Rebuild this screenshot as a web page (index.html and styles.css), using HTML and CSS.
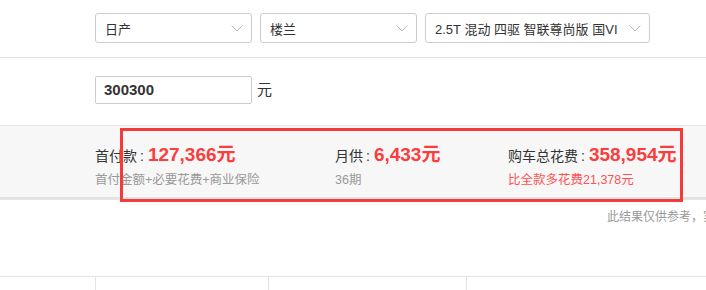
FILE: index.html
```html
<!DOCTYPE html>
<html lang="zh-CN">
<head>
    <meta charset="UTF-8">
    <title>购车计算器</title>
    <link rel="stylesheet" href="styles.css">
</head>
<body>
    <div class="page">
        <!-- 车型选择 -->
        <div class="sel-row">
            <div class="select w-brand"><span>日产</span><svg class="arrow" viewBox="0 0 12 7"><path d="M0.5 0.5 L6 6 L11.5 0.5"/></svg></div>
            <div class="select w-brand"><span>楼兰</span><svg class="arrow" viewBox="0 0 12 7"><path d="M0.5 0.5 L6 6 L11.5 0.5"/></svg></div>
            <div class="select w-model"><span>2.5T 混动 四驱 智联尊尚版 国VI</span><svg class="arrow" viewBox="0 0 12 7"><path d="M0.5 0.5 L6 6 L11.5 0.5"/></svg></div>
        </div>

        <!-- 裸车价格 -->
        <div class="price-row">
            <div class="price-input">300300</div>
            <span class="unit">元</span>
        </div>

        <!-- 计算结果 -->
        <div class="result">
            <div class="result-col c1">
                <p class="main">首付款<span class="colon">:</span><b>127,366元</b></p>
                <p class="sub">首付金额+必要花费+商业保险</p>
            </div>
            <div class="result-col c2">
                <p class="main">月供<span class="colon">:</span><b>6,433元</b></p>
                <p class="sub">36期</p>
            </div>
            <div class="result-col c3">
                <p class="main">购车总花费<span class="colon">:</span><b>358,954元</b></p>
                <p class="sub red">比全款多花费21,378元</p>
            </div>
            <div class="mark"></div>
        </div>

        <p class="note">此结果仅供参考，实际应缴费以当地为准</p>

        <!-- 明细表 -->
        <div class="table">
            <div class="cell first"></div>
            <div class="cell second"></div>
            <div class="cell third"></div>
            <div class="cell"></div>
        </div>
    </div>
</body>
</html>
```

FILE: styles.css
```css
/* リセット */
* {
    box-sizing: border-box;
    margin: 0;
    padding: 0;
}
body {
    font-family: "Liberation Sans", "Noto Sans CJK SC", sans-serif;
    color: #333;
    background-color: #fff;
    overflow: hidden;
}
.page {
    width: 800px;
}
/* 车型选择 */
.sel-row {
    height: 58px;
    padding: 13px 0 0 95px;
    border-bottom: 1px solid #e3e3e3;
    display: flex;
    gap: 8px;
}
.select {
    height: 30px;
    border: 1px solid #ccc;
    border-radius: 3px;
    display: flex;
    align-items: center;
    justify-content: space-between;
    padding: 0 8px 0 9px;
    font-size: 13px;
    color: #333;
}
.w-brand {
    width: 157px;
}
.w-model {
    width: 225px;
}
.arrow {
    width: 12px;
    height: 7px;
    fill: none;
    stroke: #bbb;
    stroke-width: 1;
}
/* 裸车价格 */
.price-row {
    height: 67px;
    padding: 18px 0 0 95px;
    display: flex;
    align-items: flex-start;
    gap: 5px;
}
.price-input {
    width: 157px;
    height: 28px;
    border: 1px solid #ccc;
    border-radius: 2px;
    padding-left: 8px;
    font-size: 15px;
    font-weight: 700;
    line-height: 26px;
    color: #333;
}
.unit {
    font-size: 15px;
    line-height: 28px;
}
/* 计算结果 */
.result {
    position: relative;
    background-color: #f7f7f7;
    border-top: 1px solid #e6e6e6;
    border-bottom: 3px solid #e3e3e3;
    height: 75px;
    padding: 17px 0 0 95px;
    display: flex;
}
.c1 {
    width: 240px;
}
.c2 {
    width: 173px;
}
.main {
    font-size: 14px;
    line-height: 24px;
    white-space: nowrap;
}
.colon {
    margin: 0 4px 0 3px;
}
.main b {
    font-size: 19px;
    color: #fa3d3d;
}
.sub {
    margin-top: 3px;
    font-size: 12.5px;
    line-height: 18px;
    color: #999;
}
.sub.red {
    color: #ff5252;
}
.mark {
    position: absolute;
    left: 120px;
    top: 2px;
    width: 563px;
    height: 74px;
    border: 3px solid #f53a3a;
}
/* 提示 */
.note {
    margin-top: 8px;
    padding-left: 607px;
    font-size: 12px;
    line-height: 18px;
    color: #999;
    white-space: nowrap;
}
/* 明细表 */
.table {
    margin-top: 50px;
    border-top: 1px solid #e3e3e3;
    height: 40px;
    display: flex;
}
.cell {
    border-left: 1px solid #e3e3e3;
    flex: 1;
}
.cell.first {
    flex: none;
    width: 95px;
    border-left: none;
}
.cell.second {
    flex: none;
    width: 173px;
}
.cell.third {
    flex: none;
    width: 198px;
}
```
